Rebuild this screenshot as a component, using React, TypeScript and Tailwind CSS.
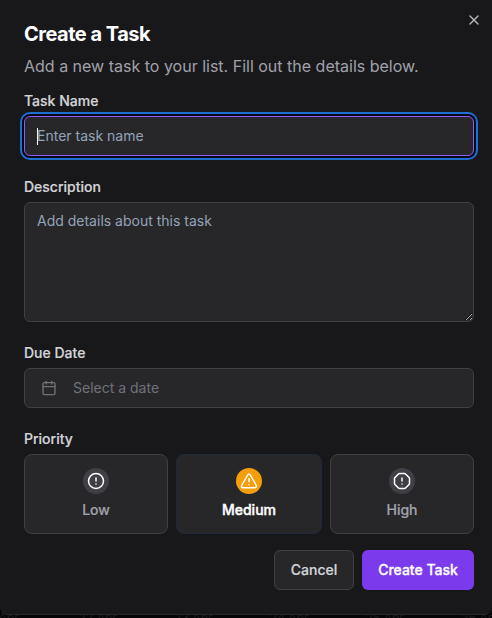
import React from "react";
import { AlertCircle, AlertOctagon, AlertTriangle, Calendar, X } from "lucide-react";

const dates = ["21 Apr", "22 Apr", "23 Apr", "24 Apr", "25 Apr", "26 Apr"];

function Label({ children }: { children: React.ReactNode }) {
  return <div className="mb-2 text-sm leading-none font-medium text-[#d4d4d8] [-webkit-text-stroke:0.2px_#d4d4d8]">{children}</div>;
}

export default function App() {
  return (
    <div className="relative h-[618px] w-[492px] overflow-hidden bg-[#050507] font-['Inter',sans-serif] antialiased">
      <div className="absolute top-[612px] left-[-17px] flex">
        {dates.map((d) => (
          <span key={d} className="w-[95.7px] shrink-0 text-xs leading-3 text-[#1b1b1e]">{d}</span>
        ))}
      </div>
      <div className="relative h-[615px] rounded-b-lg border-b border-[#27272a] bg-[#18181b] px-6 pt-6 pr-[18px]">
        <X className="absolute top-3 left-[466px] size-4 text-[#b5b5b8]" strokeWidth={2} />
        <div className="w-[450px]">
          <h2 className="text-xl leading-none font-bold tracking-tight text-white">Create a Task</h2>
          <p className="mt-2.5 text-base leading-6 text-[#a1a1aa]">Add a new task to your list. Fill out the details below.</p>

          <div className="mt-4">
            <Label>Task Name</Label>
            <div className="flex h-10 items-center rounded-md border border-[#8b5cf6] bg-[#27272a] px-3 text-sm text-[#94a3b8] shadow-[0_0_0_2px_#020817,0_0_0_4px_#1d6fd0]">
              <span className="h-[17px] w-px bg-white" />
              <span className="-ml-px">Enter task name</span>
            </div>
          </div>

          <div className="mt-6">
            <Label>Description</Label>
            <textarea
              className="block h-[120px] w-full resize-y rounded-md border border-[#3f3f46] bg-[#27272a] px-3 py-2 text-sm placeholder:text-[#94a3b8]"
              placeholder="Add details about this task"
            />
          </div>

          <div className="mt-6">
            <Label>Due Date</Label>
            <div className="flex h-10 items-center rounded-md border border-[#3f3f46] bg-[#27272a] px-4 text-sm text-[#71717a]">
              <Calendar className="mr-4 size-4" />
              Select a date
            </div>
          </div>

          <div className="mt-6">
            <Label>Priority</Label>
            <div className="flex gap-2">
              <div className="flex h-20 w-36 flex-col items-center rounded-lg border border-[#3f3f46] bg-[#27272a] pt-[13px]">
                <span className="flex size-[26px] items-center justify-center rounded-full bg-[#3f3f46]"><AlertCircle className="size-[18px] text-white" /></span>
                <span className="mt-1.5 text-sm leading-5 font-medium text-[#a1a1aa] [-webkit-text-stroke:0.2px_#a1a1aa]">Low</span>
              </div>
              <div className="flex h-20 w-[146px] flex-col items-center rounded-lg border border-[#1e293b] bg-[#27272a] pt-[13px]">
                <span className="flex size-[26px] items-center justify-center rounded-full bg-[#f59e0b]"><AlertTriangle className="size-[18px] text-white" /></span>
                <span className="mt-1.5 text-sm leading-5 font-medium text-white [-webkit-text-stroke:0.4px_#ffffff]">Medium</span>
              </div>
              <div className="flex h-20 w-36 flex-col items-center rounded-lg border border-[#3f3f46] bg-[#27272a] pt-[13px]">
                <span className="flex size-[26px] items-center justify-center rounded-full bg-[#3f3f46]"><AlertOctagon className="size-[18px] text-white" /></span>
                <span className="mt-1.5 text-sm leading-5 font-medium text-[#a1a1aa] [-webkit-text-stroke:0.2px_#a1a1aa]">High</span>
              </div>
            </div>
          </div>

          <div className="mt-4 flex justify-end gap-2">
            <button className="h-10 w-20 rounded-md border border-[#3f3f46] bg-[#27272a] text-sm font-medium text-[#d4d4d8] [-webkit-text-stroke:0.2px_#d4d4d8]">Cancel</button>
            <button className="h-10 w-28 rounded-md bg-[#7c3aed] text-sm font-medium text-white [-webkit-text-stroke:0.3px_#ffffff]">Create Task</button>
          </div>
        </div>
      </div>
    </div>
  );
}
